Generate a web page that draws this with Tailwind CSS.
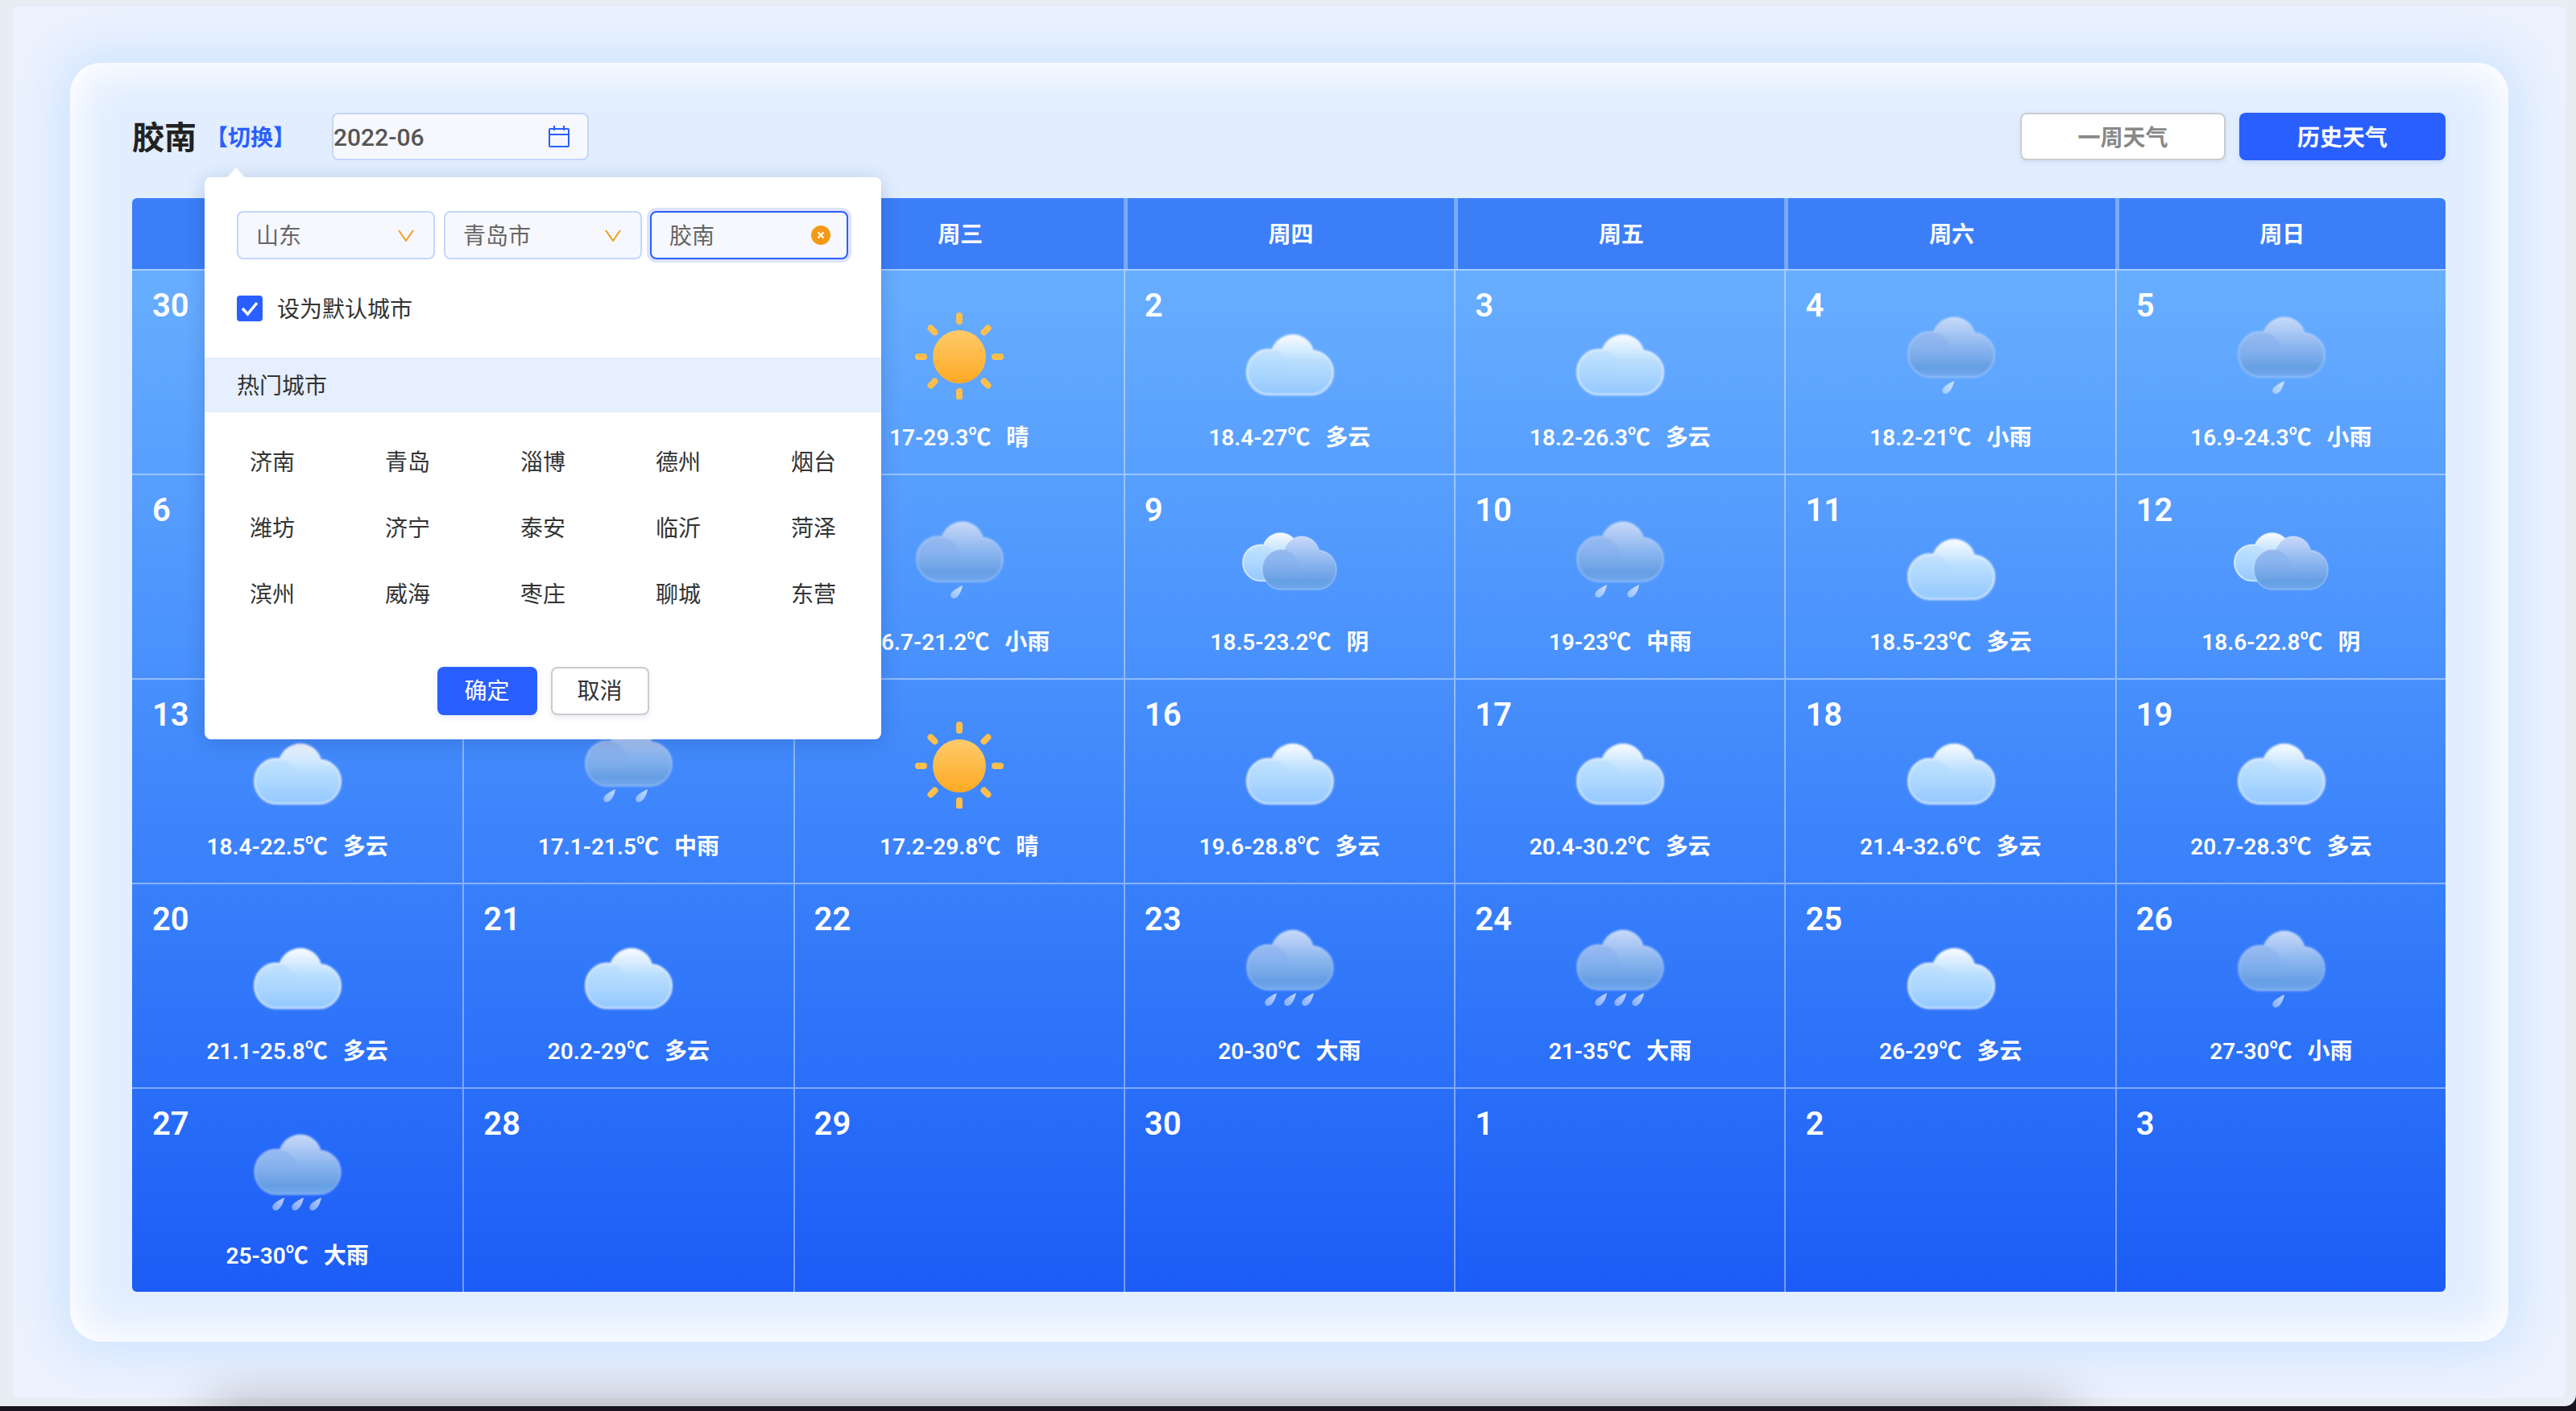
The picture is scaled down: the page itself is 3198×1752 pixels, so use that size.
<!doctype html>
<html lang="zh-CN">
<head>
<meta charset="utf-8">
<title>历史天气</title>
<script src="https://cdn.jsdelivr.net/npm/@tailwindcss/browser@4"></script>
</head>
<body class="bg-[#17141f] font-['Roboto','Noto_Sans_CJK_SC',sans-serif]">
<svg class="absolute w-0 h-0" aria-hidden="true">
  <defs>
    <linearGradient id="lw" x1="0" y1="0" x2="0" y2="1"><stop offset="0" stop-color="#f8fbff"/><stop offset=".45" stop-color="#b9defe"/><stop offset="1" stop-color="#93c8ff"/></linearGradient>
    <linearGradient id="lr" x1="0" y1="0" x2="0" y2="1"><stop offset="0" stop-color="#c8d9f9"/><stop offset=".5" stop-color="#8bb5ef"/><stop offset=".85" stop-color="#669fe3"/><stop offset="1" stop-color="#70a8ee"/></linearGradient>
    <linearGradient id="fw" x1="0" y1="0" x2="0" y2="1"><stop offset="0" stop-color="#a9d6ff" stop-opacity=".4"/><stop offset=".7" stop-color="#a9d6ff" stop-opacity="0"/></linearGradient>
    <linearGradient id="fr" x1="0" y1="0" x2="0" y2="1"><stop offset="0" stop-color="#7ba8ea" stop-opacity=".45"/><stop offset=".7" stop-color="#7ba8ea" stop-opacity="0"/></linearGradient>
    <linearGradient id="ds" x1="1" y1="0" x2="0" y2="1"><stop offset="0" stop-color="#fff" stop-opacity=".7"/><stop offset="1" stop-color="#fff" stop-opacity=".4"/></linearGradient>
    <linearGradient id="sg" x1="0" y1="0" x2="0" y2="1"><stop offset="0" stop-color="#fdcb6b"/><stop offset="1" stop-color="#ffa924"/></linearGradient>
    <filter id="sf" x="-10%" y="-10%" width="120%" height="120%"><feGaussianBlur stdDeviation=".8"/></filter>
    <path id="sil" d="M27 74C12 74 0 61 0 46C0 30 12 18 27 18C28.500 18 30 18.200 31.500 18.500C35 8 45 0 57 0C69 0 79 8 82 19.500C96 20.500 107 32 107 46C107 61 95 74 80 74Z"/>
    <path id="frn" d="M27 18C42 18 54 30 54 46C54 58 50 68 44 74L27 74C12 74 0 61 0 46C0 30 12 18 27 18Z"/>
    <path id="drp" fill="url(#ds)" d="M15 0C14 6 10 16 4 16C0 16 -1 11 2 8C5 5 10 2 15 0Z"/>
    <g id="cw" filter="url(#sf)">
      <use href="#sil" fill="url(#lw)"/><use href="#frn" fill="url(#fw)"/>
      <use href="#sil" fill="none" stroke="#ffffff" stroke-opacity=".6" stroke-width="2.500"/>
    </g>
    <g id="cr" filter="url(#sf)">
      <use href="#sil" fill="url(#lr)"/><use href="#frn" fill="url(#fr)"/>
      <use href="#sil" fill="none" stroke="#ffffff" stroke-opacity=".22" stroke-width="2.500"/>
    </g>
    <g id="i-cloud"><use href="#cw" x="7" y="30"/></g>
    <g id="i-overcast">
      <g transform="translate(2 22) scale(.82 .8)"><use href="#cw"/></g>
      <g transform="translate(26 26) scale(.86 .89)"><use href="#cr"/></g>
    </g>
    <g id="i-rain1"><use href="#cr" x="7" y="8"/><use href="#drp" x="49" y="87"/></g>
    <g id="i-rain2"><use href="#cr" x="7" y="8"/><use href="#drp" x="29" y="86"/><use href="#drp" x="69" y="86"/></g>
    <g id="i-rain3"><use href="#cr" x="7" y="7"/><use href="#drp" x="29" y="85"/><use href="#drp" x="53" y="85"/><use href="#drp" x="75" y="85"/></g>
    <g id="i-sun">
      <circle cx="60" cy="57" r="33" fill="url(#sg)"/>
      <g stroke="#ffbf4d" stroke-width="8" stroke-linecap="round">
        <path d="M60 6V13M60 100V107M9 57H16M104 57H111"/>
        <path d="M24.500 21.500L29.500 26.500M95.500 21.500L90.500 26.500M29.500 87.500L24.500 92.500M90.500 87.500L95.500 92.500"/>
      </g>
    </g>
  </defs>
</svg>

<div class="relative h-[1746px] overflow-hidden rounded-br-[14px] bg-[#e8ecf3] pt-2 pl-4">
  <div class="h-[1728px] w-[3169px] rounded-lg bg-[#ecf2fe] pt-[70px] pl-[71px]">
    <div class="relative h-[1588px] w-[3027px] rounded-[38px] bg-[#e2eeff] pt-[62px] pl-[77px] shadow-[0_0_60px_14px_#cde3ff,inset_0_0_50px_12px_#ffffff]">

      <div class="flex h-[59px] w-[2872px] items-center">
        <div class="pt-[4px] text-[40px] leading-none font-bold text-[#222222]">胶南</div>
        <div class="ml-[11px] pt-[4px] text-[28px] font-bold text-[#2a5fff]">【切换】</div>
        <div class="ml-[45px] flex h-[59px] w-[319px] items-center justify-between rounded-lg border-2 border-[#c5d6fb] bg-[#f6f8fe] pr-[22px] text-[30px] font-medium text-[#555555]">
          <span class="pt-[2px]">2022-06</span>
          <svg class="h-[27px] w-[26px]" viewBox="0 0 26 27" fill="none" stroke="#2a5fff" stroke-width="2"><rect x="1" y="4" width="24" height="22" rx="1"/><path d="M1 11H25M7 0V6M19 0V6"/></svg>
        </div>
        <div class="ml-auto flex gap-[17px]">
          <div class="flex h-[59px] w-[255px] items-center justify-center rounded-lg border-2 border-[#cccccc] bg-white pt-[4px] text-[28px] font-bold text-[#888888] shadow-[0_3px_6px_rgba(60,90,160,0.1)]">一周天气</div>
          <div class="flex h-[59px] w-[256px] items-center justify-center rounded-lg bg-[#2a5fff] pt-[4px] text-[28px] font-bold text-white shadow-[0_3px_6px_rgba(60,90,160,0.15)]">历史天气</div>
        </div>
      </div>

      <div class="mt-[47px] w-[2872px] overflow-hidden rounded-md">
        <div class="grid h-[88px] grid-cols-7 bg-[#3c7ef7] text-center text-[28px] leading-[92px] font-bold text-white">
          <div>周一</div>
          <div class="border-l-[5px] border-[#78acfb]">周二</div>
          <div class="border-l-[5px] border-[#78acfb]">周三</div>
          <div class="border-l-[5px] border-[#78acfb]">周四</div>
          <div class="border-l-[5px] border-[#78acfb]">周五</div>
          <div class="border-l-[5px] border-[#78acfb]">周六</div>
          <div class="border-l-[5px] border-[#78acfb]">周日</div>
        </div>
        <div class="grid grid-cols-7 bg-gradient-to-b from-[#68aeff] to-[#1c5cf6] text-center text-[28px] leading-10 font-semibold text-white">
          <!-- row 1 -->
          <div class="h-[254px] border-t-2 border-white/40"><div class="h-[50px] pt-[24px] pl-[25px] text-left text-[40px]">30</div></div>
          <div class="h-[254px] border-t-2 border-l-2 border-white/40"><div class="h-[50px] pt-[24px] pl-[24px] text-left text-[40px]">31</div></div>
          <div class="h-[254px] border-t-2 border-l-2 border-white/40"><div class="h-[50px] pt-[24px] pl-[24px] text-left text-[40px]">1</div><svg class="mx-auto block h-[110px] w-[120px]" viewBox="0 0 120 110"><use href="#i-sun"/></svg><div class="mt-[28px]">17-29.3℃<span class="ml-[19px]">晴</span></div></div>
          <div class="h-[254px] border-t-2 border-l-2 border-white/40"><div class="h-[50px] pt-[24px] pl-[24px] text-left text-[40px]">2</div><svg class="mx-auto block h-[110px] w-[120px]" viewBox="0 0 120 110"><use href="#i-cloud"/></svg><div class="mt-[28px]">18.4-27℃<span class="ml-[19px]">多云</span></div></div>
          <div class="h-[254px] border-t-2 border-l-2 border-white/40"><div class="h-[50px] pt-[24px] pl-[24px] text-left text-[40px]">3</div><svg class="mx-auto block h-[110px] w-[120px]" viewBox="0 0 120 110"><use href="#i-cloud"/></svg><div class="mt-[28px]">18.2-26.3℃<span class="ml-[19px]">多云</span></div></div>
          <div class="h-[254px] border-t-2 border-l-2 border-white/40"><div class="h-[50px] pt-[24px] pl-[24px] text-left text-[40px]">4</div><svg class="mx-auto block h-[110px] w-[120px]" viewBox="0 0 120 110"><use href="#i-rain1"/></svg><div class="mt-[28px]">18.2-21℃<span class="ml-[19px]">小雨</span></div></div>
          <div class="h-[254px] border-t-2 border-l-2 border-white/40"><div class="h-[50px] pt-[24px] pl-[24px] text-left text-[40px]">5</div><svg class="mx-auto block h-[110px] w-[120px]" viewBox="0 0 120 110"><use href="#i-rain1"/></svg><div class="mt-[28px]">16.9-24.3℃<span class="ml-[19px]">小雨</span></div></div>
          <!-- row 2 -->
          <div class="h-[254px] border-t-2 border-white/40"><div class="h-[50px] pt-[24px] pl-[25px] text-left text-[40px]">6</div></div>
          <div class="h-[254px] border-t-2 border-l-2 border-white/40"><div class="h-[50px] pt-[24px] pl-[24px] text-left text-[40px]">7</div></div>
          <div class="h-[254px] border-t-2 border-l-2 border-white/40"><div class="h-[50px] pt-[24px] pl-[24px] text-left text-[40px]">8</div><svg class="mx-auto block h-[110px] w-[120px]" viewBox="0 0 120 110"><use href="#i-rain1"/></svg><div class="mt-[28px]">16.7-21.2℃<span class="ml-[19px]">小雨</span></div></div>
          <div class="h-[254px] border-t-2 border-l-2 border-white/40"><div class="h-[50px] pt-[24px] pl-[24px] text-left text-[40px]">9</div><svg class="mx-auto block h-[110px] w-[120px]" viewBox="0 0 120 110"><use href="#i-overcast"/></svg><div class="mt-[28px]">18.5-23.2℃<span class="ml-[19px]">阴</span></div></div>
          <div class="h-[254px] border-t-2 border-l-2 border-white/40"><div class="h-[50px] pt-[24px] pl-[24px] text-left text-[40px]">10</div><svg class="mx-auto block h-[110px] w-[120px]" viewBox="0 0 120 110"><use href="#i-rain2"/></svg><div class="mt-[28px]">19-23℃<span class="ml-[19px]">中雨</span></div></div>
          <div class="h-[254px] border-t-2 border-l-2 border-white/40"><div class="h-[50px] pt-[24px] pl-[24px] text-left text-[40px]">11</div><svg class="mx-auto block h-[110px] w-[120px]" viewBox="0 0 120 110"><use href="#i-cloud"/></svg><div class="mt-[28px]">18.5-23℃<span class="ml-[19px]">多云</span></div></div>
          <div class="h-[254px] border-t-2 border-l-2 border-white/40"><div class="h-[50px] pt-[24px] pl-[24px] text-left text-[40px]">12</div><svg class="mx-auto block h-[110px] w-[120px]" viewBox="0 0 120 110"><use href="#i-overcast"/></svg><div class="mt-[28px]">18.6-22.8℃<span class="ml-[19px]">阴</span></div></div>
          <!-- row 3 -->
          <div class="h-[254px] border-t-2 border-white/40"><div class="h-[50px] pt-[24px] pl-[25px] text-left text-[40px]">13</div><svg class="mx-auto block h-[110px] w-[120px]" viewBox="0 0 120 110"><use href="#i-cloud"/></svg><div class="mt-[28px]">18.4-22.5℃<span class="ml-[19px]">多云</span></div></div>
          <div class="h-[254px] border-t-2 border-l-2 border-white/40"><div class="h-[50px] pt-[24px] pl-[24px] text-left text-[40px]">14</div><svg class="mx-auto block h-[110px] w-[120px]" viewBox="0 0 120 110"><use href="#i-rain2"/></svg><div class="mt-[28px]">17.1-21.5℃<span class="ml-[19px]">中雨</span></div></div>
          <div class="h-[254px] border-t-2 border-l-2 border-white/40"><div class="h-[50px] pt-[24px] pl-[24px] text-left text-[40px]">15</div><svg class="mx-auto block h-[110px] w-[120px]" viewBox="0 0 120 110"><use href="#i-sun"/></svg><div class="mt-[28px]">17.2-29.8℃<span class="ml-[19px]">晴</span></div></div>
          <div class="h-[254px] border-t-2 border-l-2 border-white/40"><div class="h-[50px] pt-[24px] pl-[24px] text-left text-[40px]">16</div><svg class="mx-auto block h-[110px] w-[120px]" viewBox="0 0 120 110"><use href="#i-cloud"/></svg><div class="mt-[28px]">19.6-28.8℃<span class="ml-[19px]">多云</span></div></div>
          <div class="h-[254px] border-t-2 border-l-2 border-white/40"><div class="h-[50px] pt-[24px] pl-[24px] text-left text-[40px]">17</div><svg class="mx-auto block h-[110px] w-[120px]" viewBox="0 0 120 110"><use href="#i-cloud"/></svg><div class="mt-[28px]">20.4-30.2℃<span class="ml-[19px]">多云</span></div></div>
          <div class="h-[254px] border-t-2 border-l-2 border-white/40"><div class="h-[50px] pt-[24px] pl-[24px] text-left text-[40px]">18</div><svg class="mx-auto block h-[110px] w-[120px]" viewBox="0 0 120 110"><use href="#i-cloud"/></svg><div class="mt-[28px]">21.4-32.6℃<span class="ml-[19px]">多云</span></div></div>
          <div class="h-[254px] border-t-2 border-l-2 border-white/40"><div class="h-[50px] pt-[24px] pl-[24px] text-left text-[40px]">19</div><svg class="mx-auto block h-[110px] w-[120px]" viewBox="0 0 120 110"><use href="#i-cloud"/></svg><div class="mt-[28px]">20.7-28.3℃<span class="ml-[19px]">多云</span></div></div>
          <!-- row 4 -->
          <div class="h-[254px] border-t-2 border-white/40"><div class="h-[50px] pt-[24px] pl-[25px] text-left text-[40px]">20</div><svg class="mx-auto block h-[110px] w-[120px]" viewBox="0 0 120 110"><use href="#i-cloud"/></svg><div class="mt-[28px]">21.1-25.8℃<span class="ml-[19px]">多云</span></div></div>
          <div class="h-[254px] border-t-2 border-l-2 border-white/40"><div class="h-[50px] pt-[24px] pl-[24px] text-left text-[40px]">21</div><svg class="mx-auto block h-[110px] w-[120px]" viewBox="0 0 120 110"><use href="#i-cloud"/></svg><div class="mt-[28px]">20.2-29℃<span class="ml-[19px]">多云</span></div></div>
          <div class="h-[254px] border-t-2 border-l-2 border-white/40"><div class="h-[50px] pt-[24px] pl-[24px] text-left text-[40px]">22</div></div>
          <div class="h-[254px] border-t-2 border-l-2 border-white/40"><div class="h-[50px] pt-[24px] pl-[24px] text-left text-[40px]">23</div><svg class="mx-auto block h-[110px] w-[120px]" viewBox="0 0 120 110"><use href="#i-rain3"/></svg><div class="mt-[28px]">20-30℃<span class="ml-[19px]">大雨</span></div></div>
          <div class="h-[254px] border-t-2 border-l-2 border-white/40"><div class="h-[50px] pt-[24px] pl-[24px] text-left text-[40px]">24</div><svg class="mx-auto block h-[110px] w-[120px]" viewBox="0 0 120 110"><use href="#i-rain3"/></svg><div class="mt-[28px]">21-35℃<span class="ml-[19px]">大雨</span></div></div>
          <div class="h-[254px] border-t-2 border-l-2 border-white/40"><div class="h-[50px] pt-[24px] pl-[24px] text-left text-[40px]">25</div><svg class="mx-auto block h-[110px] w-[120px]" viewBox="0 0 120 110"><use href="#i-cloud"/></svg><div class="mt-[28px]">26-29℃<span class="ml-[19px]">多云</span></div></div>
          <div class="h-[254px] border-t-2 border-l-2 border-white/40"><div class="h-[50px] pt-[24px] pl-[24px] text-left text-[40px]">26</div><svg class="mx-auto block h-[110px] w-[120px]" viewBox="0 0 120 110"><use href="#i-rain1"/></svg><div class="mt-[28px]">27-30℃<span class="ml-[19px]">小雨</span></div></div>
          <!-- row 5 -->
          <div class="h-[254px] border-t-2 border-white/40"><div class="h-[50px] pt-[24px] pl-[25px] text-left text-[40px]">27</div><svg class="mx-auto block h-[110px] w-[120px]" viewBox="0 0 120 110"><use href="#i-rain3"/></svg><div class="mt-[28px]">25-30℃<span class="ml-[19px]">大雨</span></div></div>
          <div class="h-[254px] border-t-2 border-l-2 border-white/40"><div class="h-[50px] pt-[24px] pl-[24px] text-left text-[40px]">28</div></div>
          <div class="h-[254px] border-t-2 border-l-2 border-white/40"><div class="h-[50px] pt-[24px] pl-[24px] text-left text-[40px]">29</div></div>
          <div class="h-[254px] border-t-2 border-l-2 border-white/40"><div class="h-[50px] pt-[24px] pl-[24px] text-left text-[40px]">30</div></div>
          <div class="h-[254px] border-t-2 border-l-2 border-white/40"><div class="h-[50px] pt-[24px] pl-[24px] text-left text-[40px]">1</div></div>
          <div class="h-[254px] border-t-2 border-l-2 border-white/40"><div class="h-[50px] pt-[24px] pl-[24px] text-left text-[40px]">2</div></div>
          <div class="h-[254px] border-t-2 border-l-2 border-white/40"><div class="h-[50px] pt-[24px] pl-[24px] text-left text-[40px]">3</div></div>
        </div>
      </div>

      <!-- city picker popover -->
      <div class="absolute top-[142px] left-[167px] h-[698px] w-[840px] rounded-lg bg-white pt-[42px] shadow-[0_4px_24px_rgba(20,50,110,0.22)]">
        <svg class="absolute top-[-12px] left-[27px] h-[13px] w-[24px]" viewBox="0 0 24 13"><path d="M0 13L12 0L24 13Z" fill="#ffffff"/></svg>
        <div class="flex h-[60px] pl-[40px] text-[28px] text-[#666666]">
          <div class="flex h-[60px] w-[246px] items-center justify-between rounded-lg border-2 border-[#c5d6fb] bg-[#f6f8fe] pr-[24px] pl-[22px]">
            <span class="pt-[4px]">山东</span>
            <svg class="h-[15px] w-[20px]" viewBox="0 0 20 15" fill="none" stroke="#f29d1f" stroke-width="2"><path d="M1 1L10 14L19 1"/></svg>
          </div>
          <div class="ml-[11px] flex h-[60px] w-[246px] items-center justify-between rounded-lg border-2 border-[#c5d6fb] bg-[#f6f8fe] pr-[24px] pl-[22px]">
            <span class="pt-[4px]">青岛市</span>
            <svg class="h-[15px] w-[20px]" viewBox="0 0 20 15" fill="none" stroke="#f29d1f" stroke-width="2"><path d="M1 1L10 14L19 1"/></svg>
          </div>
          <div class="ml-[10px] flex h-[60px] w-[246px] items-center justify-between rounded-lg border-2 border-[#2a5fff] bg-[#f6f8fe] pr-[20px] pl-[22px] shadow-[0_0_0_4px_#dfe3fb]">
            <span class="pt-[4px]">胶南</span>
            <svg class="h-[24px] w-[24px]" viewBox="0 0 24 24"><circle cx="12" cy="12" r="12" fill="#f59a17"/><path d="M8.500 8.500L15.500 15.500M15.500 8.500L8.500 15.500" stroke="#ffffff" stroke-width="2"/></svg>
          </div>
        </div>
        <div class="mt-[45px] flex h-[32px] items-center pl-[40px]">
          <div class="flex h-[32px] w-[32px] items-center justify-center rounded bg-[#2a5fff]">
            <svg class="h-[20px] w-[22px]" viewBox="0 0 22 20" fill="none" stroke="#ffffff" stroke-width="3.500"><path d="M2 10L8.500 17L20 3"/></svg>
          </div>
          <span class="ml-[18px] pt-[4px] text-[28px] text-[#333333]">设为默认城市</span>
        </div>
        <div class="mt-[45px] flex h-[68px] items-center bg-[#e5effe] pt-[4px] pl-[40px] text-[28px] text-[#333333]">热门城市</div>
        <div class="mt-[22px] grid grid-cols-5 text-center text-[28px] leading-[82px] text-[#333333]">
          <div>济南</div><div>青岛</div><div>淄博</div><div>德州</div><div>烟台</div>
          <div>潍坊</div><div>济宁</div><div>泰安</div><div>临沂</div><div>菏泽</div>
          <div>滨州</div><div>威海</div><div>枣庄</div><div>聊城</div><div>东营</div>
        </div>
        <div class="mt-[48px] flex justify-center gap-[17px] text-[28px]">
          <div class="flex h-[60px] w-[124px] items-center justify-center rounded-lg bg-[#2a5fff] pt-[2px] text-white shadow-[0_4px_6px_rgba(60,90,160,0.1)]">确定</div>
          <div class="flex h-[60px] w-[122px] items-center justify-center rounded-lg border-2 border-[#cccccc] bg-white pt-[2px] text-[#333333] shadow-[0_4px_6px_rgba(60,90,160,0.1)]">取消</div>
        </div>
      </div>
    </div>
  </div>
  <!-- shadow cast on the page's lower edge -->
  <div class="absolute top-[1750px] left-[260px] h-[40px] w-[2310px] bg-black shadow-[0_0_70px_rgba(0,0,0,0.4)]"></div>
</div>
</body>
</html>
